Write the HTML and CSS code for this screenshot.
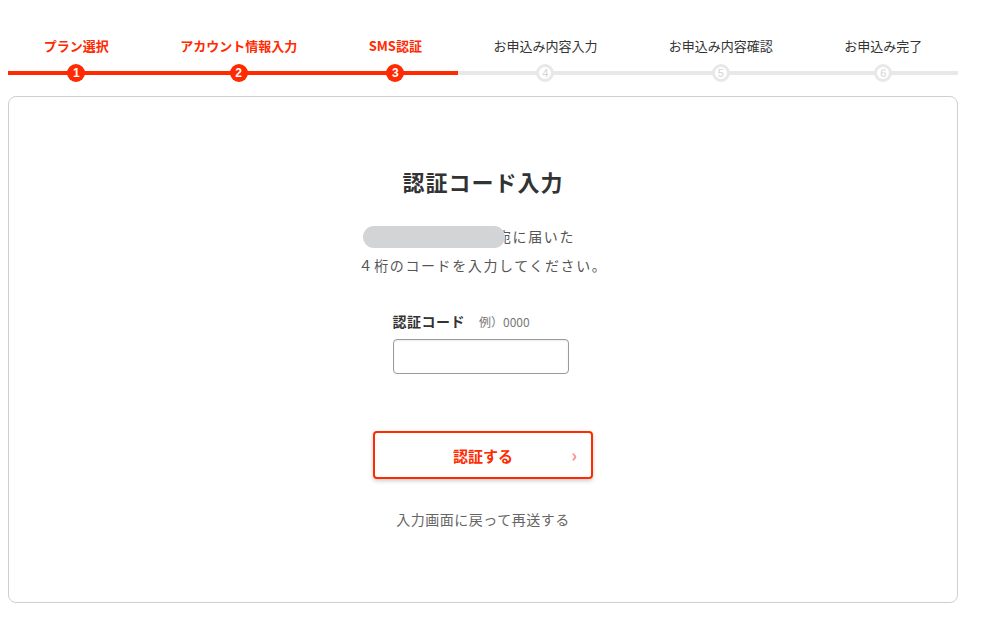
FILE: index.html
```html
<!DOCTYPE html>
<html lang="ja">
<head>
    <meta charset="UTF-8">
    <meta name="viewport" content="width=device-width, initial-scale=1.0">
    <title>SMS認証 - 認証コード入力</title>
    <link rel="stylesheet" href="styles.css">
</head>
<body>
    <div class="wrapper">
        <!-- ステップ表示 -->
        <ol class="steps">
            <li class="step done"><span class="step-label">プラン選択</span><span class="step-num">1</span></li>
            <li class="step done"><span class="step-label">アカウント情報入力</span><span class="step-num">2</span></li>
            <li class="step done"><span class="step-label">SMS認証</span><span class="step-num">3</span></li>
            <li class="step"><span class="step-label">お申込み内容入力</span><span class="step-num">4</span></li>
            <li class="step"><span class="step-label">お申込み内容確認</span><span class="step-num">5</span></li>
            <li class="step"><span class="step-label">お申込み完了</span><span class="step-num">6</span></li>
        </ol>

        <!-- 認証コード入力 -->
        <div class="card">
            <h1>認証コード入力</h1>
            <p class="lead">
                <span class="tel"><span class="masked"></span></span>宛に届いた<br>
                ４桁のコードを入力してください。
            </p>

            <div class="field">
                <label for="code">認証コード<small>例）0000</small></label>
                <input type="text" id="code" maxlength="4">
            </div>

            <button class="submit" type="button">認証する<span class="chevron">›</span></button>

            <p class="resend"><a href="#">入力画面に戻って再送する</a></p>
        </div>
    </div>
</body>
</html>
```

FILE: styles.css
```css
body {
    font-family: "Noto Sans CJK JP", "Liberation Sans", sans-serif;
    margin: 0;
    padding: 0 8px;
    background-color: #fff;
    color: #333;
}
.wrapper {
    max-width: 950px;
}
.steps {
    display: flex;
    list-style: none;
    margin: 0;
    padding: 36px 0 0;
}
.step {
    flex: 1 1 auto;
    display: flex;
    flex-direction: column;
    align-items: center;
    border-bottom: 4px solid #e8e8e8;
    position: relative;
    padding-bottom: 15px;
}
.step-label {
    font-size: 13px;
    line-height: 20px;
    color: #333;
    white-space: nowrap;
}
.step-num {
    position: absolute;
    left: 50%;
    bottom: -11px;
    margin-left: -9px;
    width: 12px;
    height: 12px;
    border: 3px solid #e8e8e8;
    border-radius: 50%;
    background-color: #fff;
    color: #d4d4d4;
    font-family: "Liberation Sans", sans-serif;
    font-size: 11px;
    line-height: 12px;
    text-align: center;
}
.step.done {
    border-bottom-color: #ff2a00;
}
.step.done .step-label {
    color: #ff2a00;
    font-weight: bold;
}
.step.done .step-num {
    width: 18px;
    height: 18px;
    border: none;
    line-height: 18px;
    background-color: #ff2a00;
    color: #fff;
    font-weight: bold;
    font-size: 12px;
}
.card {
    margin-top: 21px;
    height: 505px;
    border: 1px solid #cfcfcf;
    border-radius: 8px;
    display: flex;
    flex-direction: column;
    align-items: center;
}
h1 {
    margin: 68px 0 0;
    font-size: 22px;
    line-height: 32px;
    color: #333;
    letter-spacing: 1px;
}
.lead {
    margin: 25px 0 0;
    font-size: 14px;
    line-height: 29px;
    color: #555;
    text-align: center;
    letter-spacing: 1.6px;
}
.tel {
    display: inline-block;
    position: relative;
    width: 106px;
    height: 22px;
    vertical-align: -6px;
}
.masked {
    position: absolute;
    left: -28px;
    top: 0;
    width: 142px;
    height: 22px;
    border-radius: 11px;
    background-color: #d3d4d6;
    z-index: 1;
}
.field {
    margin-top: 31px;
    margin-left: -5px;
    width: 176px;
}
.field label {
    display: block;
    font-size: 14px;
    font-weight: bold;
    color: #333;
    line-height: 20px;
    letter-spacing: 0.5px;
}
.field small {
    font-size: 12px;
    font-weight: normal;
    color: #777;
    margin-left: 14px;
    letter-spacing: 0;
}
.field input {
    box-sizing: border-box;
    width: 176px;
    height: 35px;
    margin-top: 7px;
    border: 1px solid #9a9a9a;
    border-radius: 4px;
    box-shadow: inset 0 1px 2px rgba(0, 0, 0, 0.08);
    font-size: 14px;
    padding: 0 8px;
}
.submit {
    box-sizing: border-box;
    position: relative;
    width: 220px;
    height: 48px;
    margin-top: 57px;
    border: 2px solid #ff2a00;
    border-radius: 4px;
    background-color: #fff;
    color: #ff2a00;
    font-family: inherit;
    font-size: 15px;
    font-weight: bold;
    box-shadow: 0 2px 4px rgba(0, 0, 0, 0.2);
    cursor: pointer;
}
.chevron {
    position: absolute;
    right: 14px;
    top: 50%;
    margin-top: -12px;
    line-height: 22px;
    font-size: 18px;
    color: #ff8f80;
}
.resend {
    margin: 28px 0 0;
    font-size: 14px;
    line-height: 24px;
}
.resend a {
    color: #666;
    text-decoration: none;
    letter-spacing: 0.5px;
}
```
